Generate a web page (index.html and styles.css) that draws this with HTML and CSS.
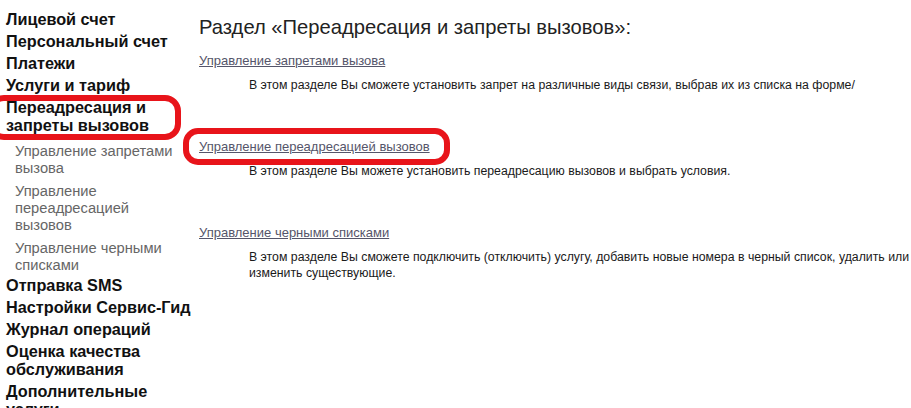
FILE: index.html
```html
<!DOCTYPE html>
<html lang="ru">
<head>
  <meta charset="UTF-8">
  <title>Переадресация и запреты вызовов</title>
  <link rel="stylesheet" href="styles.css">
</head>
<body>
  <div class="page">
    <ul class="side-menu">
      <li class="item">Лицевой счет</li>
      <li class="item">Персональный счет</li>
      <li class="item">Платежи</li>
      <li class="item">Услуги и тариф</li>
      <li class="item active">Переадресация и запреты вызовов
        <ul class="sub-menu">
          <li>Управление запретами вызова</li>
          <li>Управление переадресацией вызовов</li>
          <li>Управление черными списками</li>
        </ul>
      </li>
      <li class="item">Отправка SMS</li>
      <li class="item">Настройки Сервис-Гид</li>
      <li class="item">Журнал операций</li>
      <li class="item">Оценка качества обслуживания</li>
      <li class="item">Дополнительные услуги</li>
    </ul>

    <div class="content">
      <h1>Раздел «Переадресация и запреты вызовов»:</h1>

      <div class="section">
        <a href="#">Управление запретами вызова</a>
        <p>В этом разделе Вы сможете установить запрет на различные виды связи, выбрав их из списка на форме/</p>
      </div>

      <div class="section">
        <a href="#">Управление переадресацией вызовов</a>
        <p>В этом разделе Вы можете установить переадресацию вызовов и выбрать условия.</p>
      </div>

      <div class="section">
        <a href="#">Управление черными списками</a>
        <p>В этом разделе Вы сможете подключить (отключить) услугу, добавить новые номера в черный список, удалить или изменить существующие.</p>
      </div>
    </div>
  </div>

  <!-- красные пометки поверх скриншота -->
  <div class="mark mark-menu"></div>
  <div class="mark mark-link"></div>
</body>
</html>
```

FILE: styles.css
```css
body {
  margin: 0;
  font-family: 'Liberation Sans', Arial, sans-serif;
  background-color: #fff;
  color: #111;
  overflow: hidden;
}

.page {
  display: flex;
  padding-top: 10px;
}

.side-menu {
  list-style: none;
  margin: 0;
  padding: 0 0 0 6px;
  width: 187px;
  flex-shrink: 0;
}

.side-menu .item {
  font-size: 16.25px;
  font-weight: bold;
  line-height: 18px;
  margin-bottom: 4px;
}

.side-menu .item.active {
  margin-bottom: 2px;
}

.sub-menu {
  list-style: none;
  margin: 9px 0 0 0;
  padding: 0 12px 0 9px;
}

.sub-menu li {
  font-size: 14.7px;
  font-weight: normal;
  line-height: 17px;
  color: #666;
  margin-bottom: 6px;
}

.sub-menu li:last-child {
  margin-bottom: 0;
}

.content {
  padding-left: 6px;
  flex: 1;
}

h1 {
  font-size: 20.2px;
  font-weight: normal;
  color: #222;
  margin: 6px 0 12px 0;
}

.section {
  margin-bottom: 44px;
}

.section a {
  font-size: 13px;
  color: #55556a;
  text-decoration: underline;
}

.section p {
  font-size: 12.3px;
  line-height: 16px;
  color: #1a1a1a;
  margin: 8px 0 0 50px;
}

.mark {
  position: absolute;
  border: 6px solid #e8141a;
  border-radius: 16px;
}

.mark-menu {
  left: -12px;
  top: 95px;
  width: 181px;
  height: 33px;
}

.mark-link {
  left: 183px;
  top: 128px;
  width: 255px;
  height: 25px;
  border-radius: 15px;
}
```
